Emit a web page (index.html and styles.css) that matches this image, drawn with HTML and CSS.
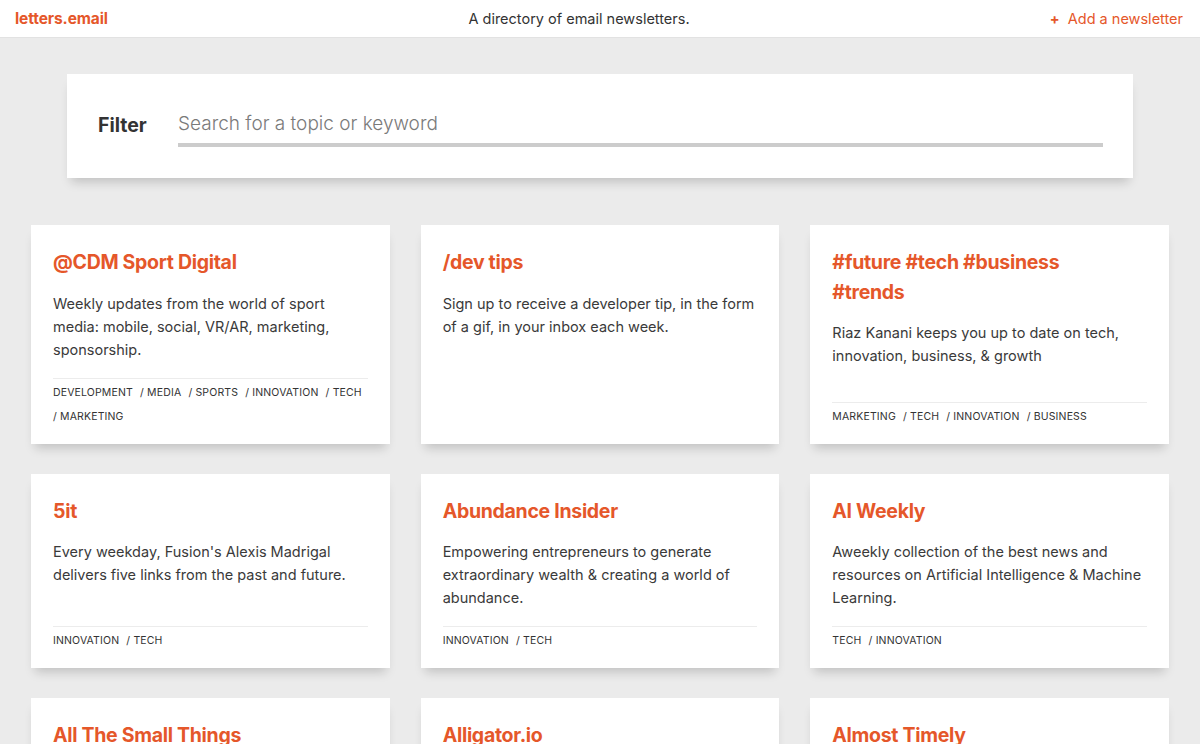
FILE: index.html
```html
<!DOCTYPE html>
<html lang="en">
<head>
<meta charset="utf-8">
<title>letters.email</title>
<link rel="stylesheet" href="styles.css">
</head>
<body>
<header class="topbar">
  <a class="logo" href="#">letters.email</a>
  <div class="tagline">A directory of email newsletters.</div>
  <a class="add" href="#"><span class="plus">+</span> Add a newsletter</a>
</header>
<main class="content">
  <section class="filter">
    <label class="filter-label" for="q">Filter</label>
    <input id="q" class="filter-input" type="text" placeholder="Search for a topic or keyword">
  </section>
  <section class="grid">
    <article class="card">
      <h2 class="card-title">@CDM Sport Digital</h2>
      <p class="card-desc">Weekly updates from the world of sport media: mobile, social, VR/AR, marketing, sponsorship.</p>
      <div class="tags"><span class="tag">DEVELOPMENT</span> <span class="tag">/ MEDIA</span> <span class="tag">/ SPORTS</span> <span class="tag">/ INNOVATION</span> <span class="tag">/ TECH</span> <span class="tag">/ MARKETING</span></div>
    </article>
    <article class="card">
      <h2 class="card-title">/dev tips</h2>
      <p class="card-desc">Sign up to receive a developer tip, in the form of a gif, in your inbox each week.</p>
    </article>
    <article class="card">
      <h2 class="card-title">#future #tech #business<br>#trends</h2>
      <p class="card-desc">Riaz Kanani keeps you up to date on tech, innovation, business, &amp; growth</p>
      <div class="tags"><span class="tag">MARKETING</span> <span class="tag">/ TECH</span> <span class="tag">/ INNOVATION</span> <span class="tag">/ BUSINESS</span></div>
    </article>
    <article class="card">
      <h2 class="card-title">5it</h2>
      <p class="card-desc">Every weekday, Fusion's Alexis Madrigal delivers five links from the past and future.</p>
      <div class="tags"><span class="tag">INNOVATION</span> <span class="tag">/ TECH</span></div>
    </article>
    <article class="card">
      <h2 class="card-title">Abundance Insider</h2>
      <p class="card-desc">Empowering entrepreneurs to generate extraordinary wealth &amp; creating a world of abundance.</p>
      <div class="tags"><span class="tag">INNOVATION</span> <span class="tag">/ TECH</span></div>
    </article>
    <article class="card">
      <h2 class="card-title">AI Weekly</h2>
      <p class="card-desc">Aweekly collection of the best news and resources on Artificial Intelligence &amp; Machine Learning.</p>
      <div class="tags"><span class="tag">TECH</span> <span class="tag">/ INNOVATION</span></div>
    </article>
    <article class="card">
      <h2 class="card-title">All The Small Things</h2>
      <p class="card-desc">A weekly newsletter.</p>
      <div class="tags"><span class="tag">DEVELOPMENT</span></div>
    </article>
    <article class="card">
      <h2 class="card-title">Alligator.io</h2>
      <p class="card-desc">A weekly newsletter.</p>
      <div class="tags"><span class="tag">DEVELOPMENT</span></div>
    </article>
    <article class="card">
      <h2 class="card-title">Almost Timely</h2>
      <p class="card-desc">A weekly newsletter.</p>
      <div class="tags"><span class="tag">MARKETING</span></div>
    </article>
  </section>
</main>
</body>
</html>
```
FILE: styles.css
```css
* { box-sizing: border-box; }
html, body { margin: 0; padding: 0; }
body {
  background: #ebebeb;
  font-family: "Inter", "Liberation Sans", sans-serif;
  color: #333;
}
a { text-decoration: none; }

.topbar {
  height: 38px;
  background: #fff;
  display: flex;
  align-items: center;
  justify-content: space-between;
  padding: 0 17px 0 15px;
  border-bottom: 1px solid #e2e2e2;
  position: relative;
}
.logo {
  color: #e5572a;
  font-weight: 700;
  font-size: 15.5px;
  letter-spacing: -0.1px;
}
.tagline {
  position: absolute;
  left: 0;
  right: 0;
  text-align: center;
  font-size: 14.5px;
  color: #333;
  pointer-events: none;
  margin-left: -42px;
}
.add {
  color: #e5572a;
  font-size: 14.5px;
}
.plus { font-weight: 700; margin-right: 4px; }

.content {
  padding: 36px 31px 0 31px;
}
.filter {
  margin: 0 36px;
  background: #fff;
  height: 104px;
  display: flex;
  align-items: center;
  padding: 0 30px 0 31px;
  box-shadow: 0 8px 10px -4px rgba(0,0,0,0.18);
}
.filter-label {
  font-size: 19.5px;
  font-weight: 700;
  color: #333;
  width: 80px;
  flex: none;
  padding-bottom: 2px;
}
.filter-input {
  flex: 1;
  border: none;
  border-bottom: 4px solid #cccccc;
  outline: none;
  font-family: inherit;
  font-size: 19px;
  font-weight: 300;
  color: #333;
  padding: 0 0 8px 0;
  margin-top: 6px;
  background: transparent;
}
.filter-input::placeholder { color: #7a7a7a; }

.grid {
  margin-top: 47px;
  display: grid;
  grid-template-columns: repeat(3, 1fr);
  column-gap: 31px;
  row-gap: 30px;
}
.card {
  background: #fff;
  padding: 23px 22px 15px 22px;
  display: flex;
  flex-direction: column;
  box-shadow: 0 8px 10px -4px rgba(0,0,0,0.18);
}
.card-title {
  margin: 0;
  font-size: 19.5px;
  line-height: 29.5px;
  font-weight: 700;
  color: #e5572a;
  letter-spacing: -0.3px;
}
.card-desc {
  margin: 14px 0 17px 0;
  font-size: 14.5px;
  line-height: 23px;
  color: #3a3a3a;
  font-weight: 400;
}
.tags {
  margin-top: auto;
  border-top: 1px solid #ececec;
  padding-top: 2px;
  font-size: 10.5px;
  line-height: 24px;
  color: #333;
  letter-spacing: 0.15px;
}
.tag {
  white-space: nowrap;
  margin-right: 4px;
}
```
